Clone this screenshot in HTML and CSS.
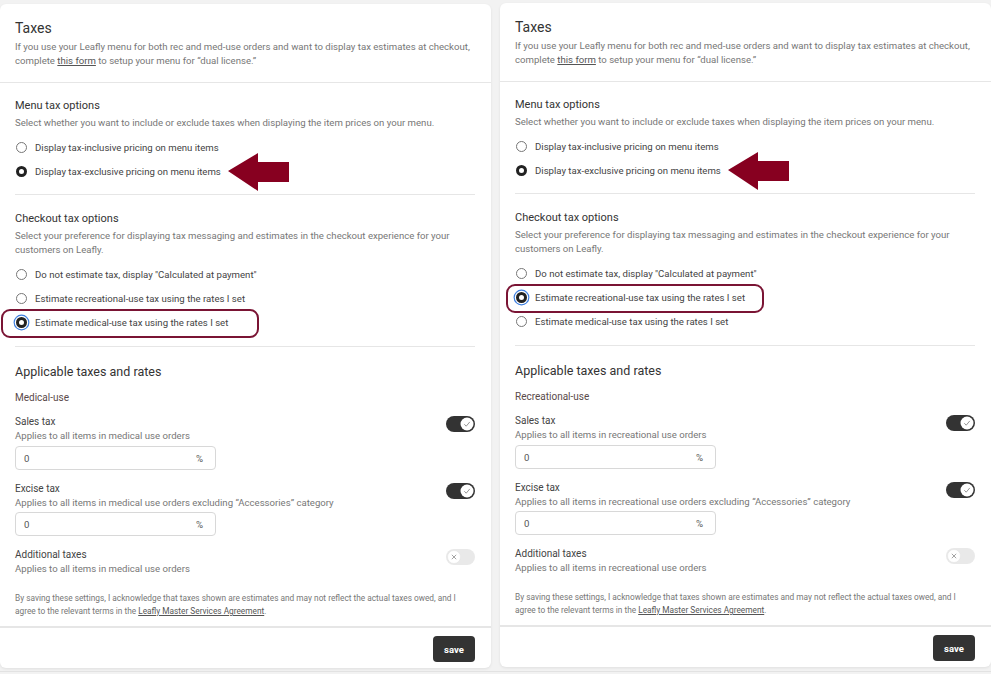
FILE: index.html
```html
<!DOCTYPE html>
<html lang="en">
<head>
    <meta charset="UTF-8">
    <meta name="viewport" content="width=device-width, initial-scale=1.0">
    <title>Taxes</title>
    <link rel="stylesheet" href="styles.css">
</head>
<body>
    <div class="page">
        <!-- medical-use card -->
        <div class="card">
            <div class="card-head">
                <h1>Taxes</h1>
                <p class="desc">If you use your Leafly menu for both rec and med-use orders and want to display tax estimates at checkout, complete <u>this form</u> to setup your menu for “dual license.”</p>
            </div>

            <div class="section sec-menu">
                <h3>Menu tax options</h3>
                <p class="desc">Select whether you want to include or exclude taxes when displaying the item prices on your menu.</p>
                <div class="radio-list">
                    <div class="radio-row"><span class="radio"></span>Display tax-inclusive pricing on menu items</div>
                    <div class="radio-row">
                        <span class="radio checked"></span>Display tax-exclusive pricing on menu items
                        <svg class="arrow" width="61" height="38" viewBox="0 0 61 38"><polygon points="0,18 30,0 30,9 61,9 61,29 30,29 30,38" fill="#870020"/></svg>
                    </div>
                </div>
            </div>

            <div class="section sec-checkout">
                <h3>Checkout tax options</h3>
                <p class="desc">Select your preference for displaying tax messaging and estimates in the checkout experience for your customers on Leafly.</p>
                <div class="radio-list">
                    <div class="radio-row"><span class="radio"></span>Do not estimate tax, display "Calculated at payment"</div>
                    <div class="radio-row"><span class="radio"></span>Estimate recreational-use tax using the rates I set</div>
                    <div class="radio-row">
                        <span class="radio checked focus"></span>Estimate medical-use tax using the rates I set
                        <span class="hl hl-med"></span>
                    </div>
                </div>
            </div>

            <div class="section sec-rates">
                <h2>Applicable taxes and rates</h2>
                <div class="use-label">Medical-use</div>

                <div class="tax">
                    <div>
                        <div class="tax-name">Sales tax</div>
                        <div class="tax-desc">Applies to all items in medical use orders</div>
                    </div>
                    <svg class="toggle" width="29" height="16" viewBox="0 0 29 16"><rect width="29" height="16" rx="8" fill="#333"/><circle cx="21" cy="8" r="6.5" fill="#fff"/><path d="M18.3 8.2l1.9 2 3.6-4.3" fill="none" stroke="#8a8a8a" stroke-width="0.9"/></svg>
                </div>
                <div class="field"><span>0</span><span>%</span></div>

                <div class="tax">
                    <div>
                        <div class="tax-name">Excise tax</div>
                        <div class="tax-desc">Applies to all items in medical use orders excluding “Accessories” category</div>
                    </div>
                    <svg class="toggle" width="29" height="16" viewBox="0 0 29 16"><rect width="29" height="16" rx="8" fill="#333"/><circle cx="21" cy="8" r="6.5" fill="#fff"/><path d="M18.3 8.2l1.9 2 3.6-4.3" fill="none" stroke="#8a8a8a" stroke-width="0.9"/></svg>
                </div>
                <div class="field field-last"><span>0</span><span>%</span></div>

                <div class="tax">
                    <div>
                        <div class="tax-name">Additional taxes</div>
                        <div class="tax-desc">Applies to all items in medical use orders</div>
                    </div>
                    <svg class="toggle" width="29" height="16" viewBox="0 0 29 16"><rect width="29" height="16" rx="8" fill="#e9e9e9"/><circle cx="8" cy="8" r="6.5" fill="#fff" stroke="#e0e0e0" stroke-width="0.5"/><path d="M5.8 5.8l4.4 4.4M10.2 5.8l-4.4 4.4" stroke="#999" stroke-width="0.9"/></svg>
                </div>

                <p class="disclaimer">By saving these settings, I acknowledge that taxes shown are estimates and may not reflect the actual taxes owed, and I agree to the relevant terms in the <u>Leafly Master Services Agreement</u>.</p>
            </div>

            <div class="card-foot">
                <button type="button" class="save">save</button>
            </div>
        </div>

        <!-- recreational-use card -->
        <div class="card card-rec">
            <div class="card-head">
                <h1>Taxes</h1>
                <p class="desc">If you use your Leafly menu for both rec and med-use orders and want to display tax estimates at checkout, complete <u>this form</u> to setup your menu for “dual license.”</p>
            </div>

            <div class="section sec-menu">
                <h3>Menu tax options</h3>
                <p class="desc">Select whether you want to include or exclude taxes when displaying the item prices on your menu.</p>
                <div class="radio-list">
                    <div class="radio-row"><span class="radio"></span>Display tax-inclusive pricing on menu items</div>
                    <div class="radio-row">
                        <span class="radio checked"></span>Display tax-exclusive pricing on menu items
                        <svg class="arrow" width="61" height="38" viewBox="0 0 61 38"><polygon points="0,18 30,0 30,9 61,9 61,29 30,29 30,38" fill="#870020"/></svg>
                    </div>
                </div>
            </div>

            <div class="section sec-checkout">
                <h3>Checkout tax options</h3>
                <p class="desc">Select your preference for displaying tax messaging and estimates in the checkout experience for your customers on Leafly.</p>
                <div class="radio-list">
                    <div class="radio-row"><span class="radio"></span>Do not estimate tax, display "Calculated at payment"</div>
                    <div class="radio-row">
                        <span class="radio checked focus"></span>Estimate recreational-use tax using the rates I set
                        <span class="hl hl-rec"></span>
                    </div>
                    <div class="radio-row"><span class="radio"></span>Estimate medical-use tax using the rates I set</div>
                </div>
            </div>

            <div class="section sec-rates">
                <h2>Applicable taxes and rates</h2>
                <div class="use-label">Recreational-use</div>

                <div class="tax">
                    <div>
                        <div class="tax-name">Sales tax</div>
                        <div class="tax-desc">Applies to all items in recreational use orders</div>
                    </div>
                    <svg class="toggle" width="29" height="16" viewBox="0 0 29 16"><rect width="29" height="16" rx="8" fill="#333"/><circle cx="21" cy="8" r="6.5" fill="#fff"/><path d="M18.3 8.2l1.9 2 3.6-4.3" fill="none" stroke="#8a8a8a" stroke-width="0.9"/></svg>
                </div>
                <div class="field"><span>0</span><span>%</span></div>

                <div class="tax">
                    <div>
                        <div class="tax-name">Excise tax</div>
                        <div class="tax-desc">Applies to all items in recreational use orders excluding “Accessories” category</div>
                    </div>
                    <svg class="toggle" width="29" height="16" viewBox="0 0 29 16"><rect width="29" height="16" rx="8" fill="#333"/><circle cx="21" cy="8" r="6.5" fill="#fff"/><path d="M18.3 8.2l1.9 2 3.6-4.3" fill="none" stroke="#8a8a8a" stroke-width="0.9"/></svg>
                </div>
                <div class="field field-last"><span>0</span><span>%</span></div>

                <div class="tax">
                    <div>
                        <div class="tax-name">Additional taxes</div>
                        <div class="tax-desc">Applies to all items in recreational use orders</div>
                    </div>
                    <svg class="toggle" width="29" height="16" viewBox="0 0 29 16"><rect width="29" height="16" rx="8" fill="#e9e9e9"/><circle cx="8" cy="8" r="6.5" fill="#fff" stroke="#e0e0e0" stroke-width="0.5"/><path d="M5.8 5.8l4.4 4.4M10.2 5.8l-4.4 4.4" stroke="#999" stroke-width="0.9"/></svg>
                </div>

                <p class="disclaimer">By saving these settings, I acknowledge that taxes shown are estimates and may not reflect the actual taxes owed, and I agree to the relevant terms in the <u>Leafly Master Services Agreement</u>.</p>
            </div>

            <div class="card-foot">
                <button type="button" class="save">save</button>
            </div>
        </div>
    </div>
</body>
</html>
```

FILE: styles.css
```css
body {
    margin: 0;
    padding: 0;
    background-color: #f2f2f2;
    font-family: Roboto, "Liberation Sans", sans-serif;
    color: #333;
}

.page {
    display: flex;
    gap: 9px;
    padding-top: 4px;
    border-bottom: 1px solid #e2e2e2;
    height: 667px;
}

.card {
    flex: none;
    display: flex;
    flex-direction: column;
    width: 491px;
    height: 664px;
    background-color: white;
    border-radius: 6px;
    box-shadow: 0 1px 3px rgba(0, 0, 0, 0.08);
}

.card-rec {
    margin-top: -1px;
}

.card-head {
    padding: 14px 16px 14px 15px;
    border-bottom: 1px solid #e6e6e6;
}

h1 {
    margin: 0;
    font-size: 14px;
    line-height: 20px;
    font-weight: 400;
    color: #333;
}

h2 {
    margin: 0;
    font-size: 12.5px;
    line-height: 20px;
    font-weight: 400;
    color: #333;
}

h3 {
    margin: 0;
    font-size: 11px;
    line-height: 16px;
    font-weight: 400;
    color: #333;
}

.desc {
    margin: 2px 0 0;
    font-size: 9.6px;
    line-height: 14px;
    color: #777;
}

.desc u {
    color: #555;
}

.section {
    margin: 0 16px 0 15px;
    border-bottom: 1px solid #e6e6e6;
}

.sec-menu {
    padding: 15px 0 11px;
}

.sec-checkout {
    padding: 16px 0 12px;
}

.sec-rates {
    margin: 0;
    padding: 15px 16px 8px 15px;
}

.radio-list {
    margin-top: 5px;
}

.radio-row {
    position: relative;
    display: flex;
    align-items: center;
    gap: 8px;
    height: 24px;
    font-size: 9.6px;
    color: #444;
}

.radio {
    flex: none;
    width: 11px;
    height: 11px;
    box-sizing: border-box;
    border: 1px solid #777;
    border-radius: 50%;
    margin-left: 1px;
}

.radio.checked {
    border: 3.5px solid #222;
    background-color: white;
}

.radio.focus {
    box-shadow: 0 0 0 1.2px white, 0 0 0 2.4px #3d7fe0;
}

.arrow {
    position: absolute;
    left: 213px;
    top: -6px;
}

.hl {
    position: absolute;
    top: -1px;
    height: 29px;
    width: 258px;
    box-sizing: border-box;
    border: 2.5px solid #7a1434;
    border-radius: 9px;
}

.hl-med {
    left: -14px;
}

.hl-rec {
    left: -9px;
}

.use-label {
    margin-top: 9px;
    font-size: 10px;
    line-height: 14px;
    color: #5a4a4a;
}

.tax {
    display: flex;
    justify-content: space-between;
    align-items: flex-start;
    margin-top: 10px;
}

.field + .tax {
    margin-top: 12px;
}

.tax-name {
    font-size: 10px;
    line-height: 14px;
    color: #444;
}

.tax-desc {
    font-size: 9.6px;
    line-height: 14px;
    color: #777;
}

.toggle {
    margin-top: 1px;
}

.field {
    display: flex;
    justify-content: space-between;
    align-items: center;
    width: 201px;
    height: 24px;
    box-sizing: border-box;
    margin-top: 3px;
    padding: 0 12px 0 8px;
    border: 1px solid #d8d8d8;
    border-radius: 4px;
    font-size: 9.6px;
    color: #555;
}

.field-last {
    margin-top: 2px;
}

.disclaimer {
    margin: 16px 0 0;
    font-size: 8.3px;
    line-height: 13px;
    color: #777;
}

.disclaimer u {
    color: #555;
}

.card-foot {
    display: flex;
    justify-content: flex-end;
    padding: 8px 16px 7px;
    border-top: 1px solid #e6e6e6;
}

.save {
    width: 42px;
    height: 26px;
    padding: 0;
    border: none;
    border-radius: 4px;
    background-color: #333;
    color: white;
    font-family: Roboto, "Liberation Sans", sans-serif;
    font-size: 9.5px;
    font-weight: 700;
}
```
